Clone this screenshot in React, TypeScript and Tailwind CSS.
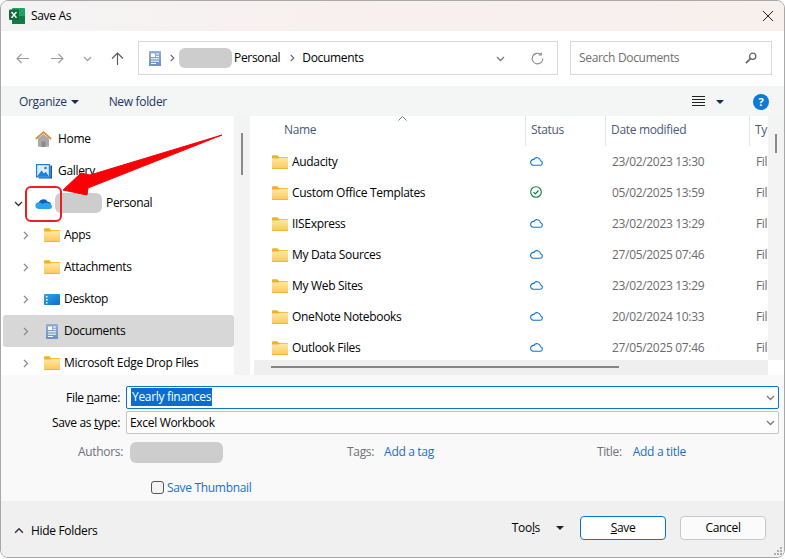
import type { ReactNode } from 'react'

const FILES: { name: string; synced?: boolean; date: string }[] = [
    { name: 'Audacity', date: '23/02/2023 13:30' },
    { name: 'Custom Office Templates', synced: true, date: '05/02/2025 13:59' },
    { name: 'IISExpress', date: '23/02/2023 13:29' },
    { name: 'My Data Sources', date: '27/05/2025 07:46' },
    { name: 'My Web Sites', date: '23/02/2023 13:29' },
    { name: 'OneNote Notebooks', date: '20/02/2024 10:33' },
    { name: 'Outlook Files', date: '27/05/2025 07:46' },
]

function FolderIcon({ className = '' }: { className?: string }) {
    return (
        <svg width="16" height="14" viewBox="0 0 16 14" className={className}>
            <defs>
                <linearGradient id="folderBody" x1="0" y1="0" x2="0" y2="1">
                    <stop offset="0" stopColor="#ffe9a8" />
                    <stop offset="1" stopColor="#fbc95a" />
                </linearGradient>
            </defs>
            <path d="M0 1.500C0 .8.5.3 1.200.3h4l1.800 1.700h7.800c.7 0 1.200.5 1.200 1.200V5H0z" fill="#f4b01e" />
            <path d="M0 3.600h6.400l1.400-.9h7c.7 0 1.200.5 1.200 1.200v8.600c0 .7-.5 1.200-1.200 1.200H1.200C.5 13.700 0 13.200 0 12.500z" fill="url(#folderBody)" />
            <path d="M0 13h16v.2c0 .3-.5.6-1.200.6H1.200C.5 13.800 0 13.500 0 13.200z" fill="#eaa91f" />
        </svg>
    )
}

function CloudOutline() {
    return (
        <svg width="13" height="10" viewBox="0 0 13 10" fill="none" stroke="#0a74d0" strokeWidth="1.100">
            <path d="M3.200 9.300h6.900a2.300 2.300 0 0 0 .4-4.550A3.500 3.500 0 0 0 4 3.400a2.950 2.950 0 0 0-.8 5.900z" />
        </svg>
    )
}

function SyncedCheck() {
    return (
        <svg width="12" height="12" viewBox="0 0 12 12" fill="none" stroke="#107c41">
            <circle cx="6" cy="6" r="5.300" strokeWidth="1.100" />
            <path d="M3.500 6.200 5.300 8l3.200-3.500" strokeWidth="1.200" />
        </svg>
    )
}

function OneDriveIcon() {
    return (
        <svg width="17" height="12" viewBox="0 0 17 12">
            <path d="M3.500 7A5 5 0 0 1 12.700 4.700 3.500 3.500 0 0 1 16 8.500L7 10z" fill="#0b5fb6" />
            <path d="M3.500 12A3.400 3.400 0 0 1 3 5.300c2-.4 3.500.5 4.500 1.600 1.500-1 3.500-1.500 5.200-1 2.400.1 4.300 1.800 4.300 3.600 0 1.300-.7 2.500-2.200 2.500z" fill="#2ba5ea" />
        </svg>
    )
}

function HomeIcon() {
    return (
        <svg width="17" height="16" viewBox="0 0 17 16">
            <path d="M3 7.500 8.500 3 14 7.500V15a.8.8 0 0 1-.8.8H3.800A.8.8 0 0 1 3 15z" fill="#a9a9a9" />
            <path d="M6.500 10.500h4V16h-4z" fill="#8a8a8a" />
            <path d="M.8 8 8.500 1.200 16.200 8" fill="none" stroke="#dd8d3d" strokeWidth="1.800" />
        </svg>
    )
}

function GalleryIcon() {
    return (
        <svg width="16" height="15" viewBox="0 0 16 15">
            <path d="M14.300 1.500H16V14.500H3v-1.200h11.300z" fill="#0f5aa8" />
            <rect x="0" y="0" width="14" height="13.500" fill="#1f7ed8" />
            <rect x="1.200" y="1.200" width="11.600" height="11" fill="#dcefff" />
            <path d="M1.200 12.200 5.500 6.500l2.500 3 1.800-1.800 3 4.500z" fill="#1f7ed8" />
            <circle cx="9.500" cy="4" r="1.300" fill="#1f7ed8" />
        </svg>
    )
}

function DesktopIcon() {
    return (
        <svg width="16" height="11" viewBox="0 0 16 11">
            <defs>
                <linearGradient id="desktopBody" x1="0" y1="0" x2="1" y2="1">
                    <stop offset="0" stopColor="#2da8ea" />
                    <stop offset="1" stopColor="#0e6cc0" />
                </linearGradient>
            </defs>
            <rect width="16" height="11" rx="1" fill="url(#desktopBody)" />
            <rect x="2" y="2" width="1.500" height="1.500" fill="#fff" />
            <rect x="2" y="5" width="1.500" height="1.500" fill="#fff" />
            <rect x="2" y="8" width="1.500" height="1.500" fill="#fff" />
        </svg>
    )
}

function DocIcon() {
    return (
        <svg width="12" height="15" viewBox="0 0 12 15">
            <defs>
                <linearGradient id="docBody" x1="0" y1="0" x2="0" y2="1">
                    <stop offset="0" stopColor="#8fb0d8" />
                    <stop offset="1" stopColor="#6f8fbf" />
                </linearGradient>
            </defs>
            <rect width="12" height="15" rx=".6" fill="url(#docBody)" />
            <rect x="2" y="2.500" width="4" height="3.500" fill="#fff" />
            <path d="M7 3h3M7 5.400h3M2 7.800h8M2 10.200h8M2 12.500h5" stroke="#fff" strokeWidth="1" />
        </svg>
    )
}

function ExcelIcon() {
    return (
        <svg width="16" height="16" viewBox="0 0 16 16">
            <rect x="3" y="0" width="13" height="16" rx="1" fill="#21a366" />
            <rect x="3" y="8" width="13" height="8" fill="#107c41" />
            <rect x="0" y="1.500" width="10" height="10.500" rx="1" fill="#0e6b38" />
            <path d="M2.500 4 7.500 9.800M7.500 4 2.500 9.800" stroke="#fff" strokeWidth="1.400" />
        </svg>
    )
}

function Chevron({ dir, color = '#8c8c8c', size = 9 }: { dir: 'right' | 'down' | 'up'; color?: string; size?: number }) {
    const d = dir === 'right' ? 'M3 1l3.500 3.500L3 8' : dir === 'down' ? 'M1 3l3.500 3.500L8 3' : 'M1 6l3.500-3.500L8 6'
    return (
        <svg width={size} height={size} viewBox="0 0 9 9" fill="none" stroke={color} strokeWidth="1.300" className="shrink-0">
            <path d={d} />
        </svg>
    )
}

function Caret() {
    return (
        <svg width="8" height="4" viewBox="0 0 8 4" className="shrink-0">
            <path d="M0 0h8L4 4z" fill="#1b2a56" />
        </svg>
    )
}

function TreeRow({ label, icon, level, selected }: { label: string; icon: ReactNode; level: 0 | 1; selected?: boolean }) {
    return (
        <div className={`flex h-8 items-center rounded-[3px] ${selected ? 'bg-[#d7d7d7]' : ''}`}>
            {level === 1 && <span className="ml-[18px] flex w-[20px] shrink-0"><Chevron dir="right" /></span>}
            {level === 0 && <span className="ml-[30px] w-[0px]" />}
            <span className="flex w-[21px] shrink-0 justify-center">{icon}</span>
            <span className={`whitespace-nowrap ${level === 1 ? 'ml-[2px]' : 'ml-[4px]'}`}>{label}</span>
        </div>
    )
}

function FileRow({ name, synced, date }: { name: string; synced?: boolean; date: string }) {
    return (
        <div className="flex h-[31px] shrink-0 items-center whitespace-nowrap">
            <FolderIcon className="ml-[18px] shrink-0" />
            <span className="ml-[4px] w-[238px] text-black">{name}</span>
            <span className="flex w-[82px] items-center pb-[2px]">{synced ? <SyncedCheck /> : <CloudOutline />}</span>
            <span className="w-[144px] text-[#6b6b6b]">{date}</span>
            <span className="text-[#6b6b6b]">Fil</span>
        </div>
    )
}

export default function App() {
    return (
        <div className="relative h-[559px] w-[785px] overflow-hidden bg-white pb-[1px] font-['Open_Sans',sans-serif] text-[12px] leading-none tracking-[-0.32px] text-black">
            <div className="flex h-[558px] w-[785px] flex-col overflow-hidden rounded-[8px] border border-[#a8a8a8]">
                {/* title bar */}
                <div className="flex h-[30px] shrink-0 items-center bg-gradient-to-r from-[#f4f4f4] via-[#f8efee] to-[#f7f0ed] pl-[8px]">
                    <ExcelIcon />
                    <span className="ml-[6px] text-black">Save As</span>
                    <svg width="12" height="12" viewBox="0 0 12 12" className="ml-auto mr-[10px]" stroke="#222" strokeWidth="1">
                        <path d="M1 1l10 10M11 1 1 11" />
                    </svg>
                </div>

                {/* address row */}
                <div className="flex h-[55px] shrink-0 items-center bg-white pb-[1px]">
                    <svg width="13" height="11" viewBox="0 0 13 11" fill="none" stroke="#9a9a9a" strokeWidth="1.100" className="ml-[15px]">
                        <path d="M13 5.500H1M5.500 1 1 5.500 5.500 10" />
                    </svg>
                    <svg width="13" height="11" viewBox="0 0 13 11" fill="none" stroke="#9a9a9a" strokeWidth="1.100" className="ml-[22px]">
                        <path d="M0 5.500h12M7.500 1 12 5.500 7.500 10" />
                    </svg>
                    <span className="ml-[19px]"><Chevron dir="down" color="#a0a0a0" /></span>
                    <svg width="13" height="13" viewBox="0 0 13 13" fill="none" stroke="#555" strokeWidth="1.100" className="ml-[19px]">
                        <path d="M6.500 13V1M1 6.500 6.500 1 12 6.500" />
                    </svg>
                    <div className="ml-[14px] flex h-[34px] w-[420px] items-center border border-[#d9d9d9] pl-[10px]">
                        <DocIcon />
                        <span className="ml-[7px]"><Chevron dir="right" color="#666" size={8} /></span>
                        <span className="ml-[3px] h-[20px] w-[53px] rounded-[6px] bg-[#cdcdcd]" />
                        <span className="ml-[2px]">Personal</span>
                        <span className="ml-[8px]"><Chevron dir="right" color="#666" size={8} /></span>
                        <span className="ml-[6px]">Documents</span>
                        <span className="ml-auto"><Chevron dir="down" color="#777" /></span>
                        <svg width="13" height="13" viewBox="0 0 13 13" fill="none" stroke="#888" strokeWidth="1.100" className="ml-[26px] mr-[13px]">
                            <path d="M11.800 6.500A5.300 5.300 0 1 1 9.800 2.400M10.300.4v2.600H7.700" />
                        </svg>
                    </div>
                    <div className="ml-[12px] flex h-[34px] w-[202px] items-center border border-[#d9d9d9] pl-[8px] pr-[14px] text-[#6e6e6e]">
                        <span>Search Documents</span>
                        <svg width="12" height="12" viewBox="0 0 12 12" fill="none" stroke="#666" className="ml-auto">
                            <circle cx="7.700" cy="4.300" r="3.100" strokeWidth="1.300" />
                            <path d="M5.400 6.600.9 11.100" strokeWidth="1.700" />
                        </svg>
                    </div>
                </div>

                {/* toolbar */}
                <div className="flex h-[30px] shrink-0 items-center bg-[#f4f5f5] pt-[1px] text-[#1e3560]">
                    <span className="ml-[18px]">Organize</span>
                    <span className="ml-[4px]"><Caret /></span>
                    <span className="ml-[30px]">New folder</span>
                    <svg width="13" height="11" viewBox="0 0 13 11" stroke="#222" strokeWidth="1" className="ml-auto">
                        <path d="M0 .5h13M0 3.500h13M0 6.500h13M0 9.500h13" />
                    </svg>
                    <span className="ml-[11px]"><Caret /></span>
                    <span className="ml-[29px] mr-[15px] flex h-[16px] w-[16px] items-center justify-center rounded-full bg-[#0f7ad6] text-[11px] font-bold text-white">?</span>
                </div>

                {/* panes */}
                <div className="relative flex h-[259px] shrink-0 overflow-hidden bg-white">
                    <div className="w-[233px] shrink-0 pl-[2px] pt-[7px]">
                        <TreeRow label="Home" icon={<HomeIcon />} level={0} />
                        <TreeRow label="Gallery" icon={<GalleryIcon />} level={0} />
                        <div className="flex h-8 items-center">
                            <span className="ml-[11px] w-[19px]"><Chevron dir="down" color="#333" /></span>
                            <span className="flex w-[21px] justify-center"><OneDriveIcon /></span>
                            <span className="ml-[1px] h-[20px] w-[47px] rounded-[6px] bg-[#cdcdcd]" />
                            <span className="ml-[4px]">Personal</span>
                        </div>
                        <TreeRow label="Apps" icon={<FolderIcon />} level={1} />
                        <TreeRow label="Attachments" icon={<FolderIcon />} level={1} />
                        <TreeRow label="Desktop" icon={<DesktopIcon />} level={1} />
                        <TreeRow label="Documents" icon={<DocIcon />} level={1} selected />
                        <TreeRow label="Microsoft Edge Drop Files" icon={<FolderIcon />} level={1} />
                    </div>
                    <div className="w-[16px] shrink-0 bg-[#f3f3f3] pl-[7px] pt-[17px]">
                        <div className="h-[42px] w-[2px] bg-[#8a8a8a]" />
                    </div>
                    <div className="flex min-w-0 flex-1 flex-col pl-[4px]">
                        <div className="relative flex h-[30px] shrink-0 items-stretch whitespace-nowrap text-[#4a5a78]">
                            <div className="w-[272px] border-r border-[#e5e5e5] pl-[30px] pt-[8px]">Name</div>
                            <div className="w-[80px] border-r border-[#e5e5e5] pl-[5px] pt-[8px]">Status</div>
                            <div className="w-[144px] border-r border-[#e5e5e5] pl-[5px] pt-[8px]">Date modified</div>
                            <div className="pl-[5px] pt-[8px]">Ty</div>
                            <svg width="9" height="5" viewBox="0 0 9 5" fill="none" stroke="#777" className="absolute left-[144px] top-0">
                                <path d="M.5 4.500l4-4 4 4" />
                            </svg>
                        </div>
                        <div className="flex min-h-0 flex-1 flex-col overflow-hidden">
                            {FILES.map((file) => (
                                <FileRow key={file.name} {...file} />
                            ))}
                        </div>
                        <div className="h-[15px] shrink-0 bg-[#efefef] pl-[17px] pt-[6px]">
                            <div className="h-[2px] w-[348px] bg-[#858585]" />
                        </div>
                    </div>
                    <div className="h-[244px] w-[16px] shrink-0 self-start bg-[#f3f3f3] pl-[7px] pt-[18px]">
                        <div className="h-[19px] w-[2px] bg-[#8a8a8a]" />
                    </div>
                </div>

                {/* details */}
                <div className="h-[126px] shrink-0 bg-[#f9f9f9]">
                    <div className="mt-[11px] flex items-center">
                        <span className="w-[119px] whitespace-nowrap text-right">File <span className="underline">n</span>ame:</span>
                        <div className="ml-[6px] flex h-[23px] w-[653px] items-center rounded-[2px] border border-[#0a74d0] bg-white pb-[1px] pl-[4px] pr-[3px]">
                            <span className="bg-[#0a6ed1] px-[1px] py-[3px] text-white">Yearly finances</span>
                            <span className="ml-auto"><Chevron dir="down" color="#777" /></span>
                        </div>
                    </div>
                    <div className="mt-[2px] flex items-center">
                        <span className="w-[119px] whitespace-nowrap text-right">Save as <span className="underline">t</span>ype:</span>
                        <div className="ml-[6px] flex h-[23px] w-[653px] items-center rounded-[2px] border border-[#c4c4c4] bg-[#fdfdfd] pl-[3px] pr-[3px]">
                            <span>Excel Workbook</span>
                            <span className="ml-auto"><Chevron dir="down" color="#777" /></span>
                        </div>
                    </div>
                    <div className="mt-[7px] flex h-[22px] items-center text-[#70707a]">
                        <span className="ml-[77px]">Authors:</span>
                        <span className="ml-[7px] h-[21px] w-[93px] rounded-[6px] bg-[#cdcdcd]" />
                        <span className="ml-[124px]">Tags:</span>
                        <span className="ml-[10px] text-[#1a6fc9]">Add a tag</span>
                        <span className="ml-[163px]">Title:</span>
                        <span className="ml-[11px] text-[#1a6fc9]">Add a title</span>
                    </div>
                    <div className="mt-[18px] flex items-center">
                        <span className="ml-[150px] h-[13px] w-[13px] rounded-[3px] border border-[#555] bg-[#f4f4f4]" />
                        <span className="ml-[3px] text-[#1a6fc9]">Save Thumbnail</span>
                    </div>
                </div>

                {/* footer */}
                <div className="relative flex flex-1 items-center bg-[#f0f0f0] pb-[3px]">
                    <span className="ml-[13px] mt-[6px]"><Chevron dir="up" color="#333" size={10} /></span>
                    <span className="ml-[7px] mt-[6px]">Hide Folders</span>
                    <span className="ml-auto">Too<span className="underline">l</span>s</span>
                    <span className="ml-[16px]"><svg width="8" height="4" viewBox="0 0 8 4"><path d="M0 0h8L4 4z" fill="#222" /></svg></span>
                    <button type="button" className="ml-[16px] h-[24px] w-[86px] rounded-[4px] border border-[#0a74d0] bg-white"><span className="underline">S</span>ave</button>
                    <button type="button" className="ml-[14px] mr-[18px] h-[24px] w-[86px] rounded-[4px] border border-[#c8c8c8] bg-[#fbfbfb]">Cancel</button>
                    <svg width="9" height="9" viewBox="0 0 9 9" fill="#b0b0b0" className="absolute bottom-[1px] right-[1px]">
                        <rect x="6" y="0" width="2" height="2" />
                        <rect x="3" y="3" width="2" height="2" />
                        <rect x="6" y="3" width="2" height="2" />
                        <rect x="0" y="6" width="2" height="2" />
                        <rect x="3" y="6" width="2" height="2" />
                        <rect x="6" y="6" width="2" height="2" />
                    </svg>
                </div>
            </div>

            {/* annotation drawn over the screenshot */}
            <svg width="240" height="110" viewBox="0 0 240 110" fill="none" className="absolute left-0 top-[125px]">
                <rect x="26" y="62" width="35" height="34" rx="5" stroke="#f01c24" strokeWidth="2" />
                <path d="M222 10 90 50 81 48 63 65 87 70 88 63z" fill="#fb0007" stroke="#fb0007" strokeLinejoin="round" />
            </svg>
        </div>
    )
}
